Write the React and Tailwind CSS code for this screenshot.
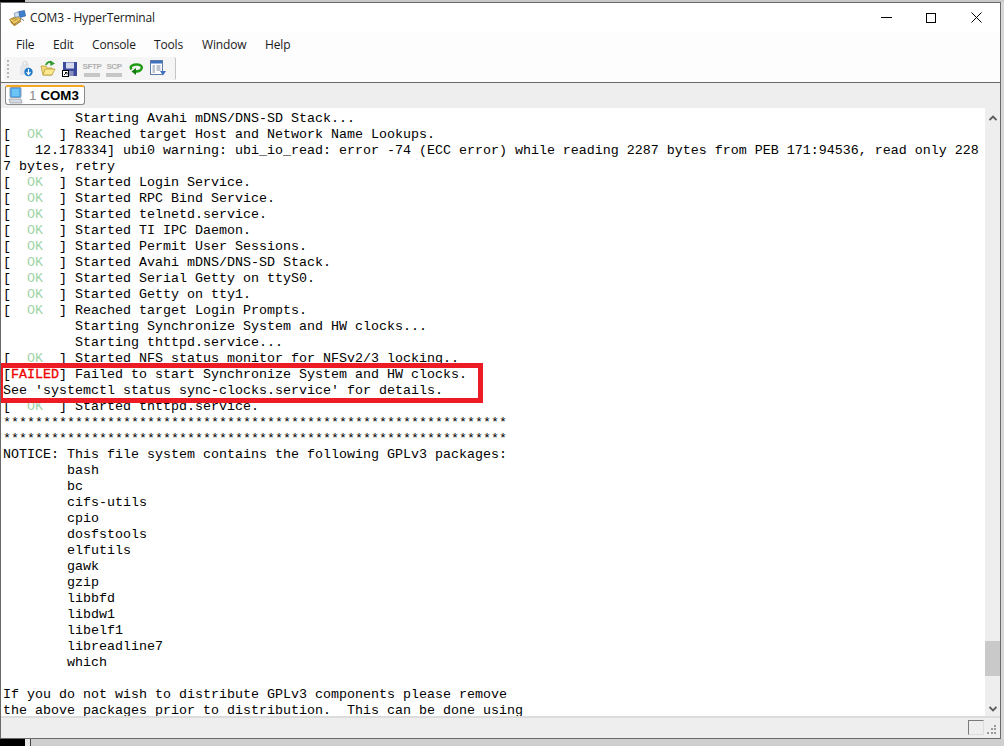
const ok = 'OK';
const L = [
  "         Starting Avahi mDNS/DNS-SD Stack...",
  "#Reached target Host and Network Name Lookups.",
  "[   12.178334] ubi0 warning: ubi_io_read: error -74 (ECC error) while reading 2287 bytes from PEB 171:94536, read only 228",
  "7 bytes, retry",
  "#Started Login Service.",
  "#Started RPC Bind Service.",
  "#Started telnetd.service.",
  "#Started TI IPC Daemon.",
  "#Started Permit User Sessions.",
  "#Started Avahi mDNS/DNS-SD Stack.",
  "#Started Serial Getty on ttyS0.",
  "#Started Getty on tty1.",
  "#Reached target Login Prompts.",
  "         Starting Synchronize System and HW clocks...",
  "         Starting thttpd.service...",
  "#Started NFS status monitor for NFSv2/3 locking..",
  "!Failed to start Synchronize System and HW clocks.",
  "See 'systemctl status sync-clocks.service' for details.",
  "#Started thttpd.service.",
  "*".repeat(63),
  "*".repeat(63),
  "NOTICE: This file system contains the following GPLv3 packages:",
  "        bash",
  "        bc",
  "        cifs-utils",
  "        cpio",
  "        dosfstools",
  "        elfutils",
  "        gawk",
  "        gzip",
  "        libbfd",
  "        libdw1",
  "        libelf1",
  "        libreadline7",
  "        which",
  "",
  "If you do not wish to distribute GPLv3 components please remove",
  "the above packages prior to distribution.  This can be done using",
];

function Line({ t }) {
  if (t[0] === '#') return <div className="h-4">[  <span className="text-[#9fd3a8]">{ok}</span>  ] {t.slice(1)}</div>;
  if (t[0] === '!') return <div className="h-4">[<span className="text-[#f00000] [-webkit-text-stroke:0.3px_#f00000]">FAILED</span>] {t.slice(1)}</div>;
  return <div className="h-4">{t || ' '}</div>;
}

const AppIcon = () => (
  <svg width="17" height="16" viewBox="0 0 17 16" className="shrink-0">
    <path d="M0.5 9.5 L8 6 L12 9.5 L5 14.5 Z" fill="#f0c860" stroke="#8a6a20" strokeWidth="0.8" />
    <path d="M1.5 11.5 L5.5 15.5 L12 11" fill="none" stroke="#a8801c" strokeWidth="1.1" />
    <path d="M3 9.5 L8 7.5 M4.5 11 L9 8.5" stroke="#9a7a2a" strokeWidth="0.7" />
    <path d="M5 3.5 L9.5 1.5 L11 6 L6.5 7.5 Z" fill="#cfe0f2" stroke="#6f88a8" strokeWidth="0.7" />
    <path d="M10 1.5 L15.5 0.5 L16.5 6 L11 7.5 Z" fill="#3f7fd0" stroke="#2f5f9f" strokeWidth="0.7" />
    <path d="M11 8 L15 10.5" stroke="#7a7a7a" strokeWidth="1" />
  </svg>
);

const Grip = () => (
  <div className="flex flex-col gap-[2px] ml-[3px] mr-[9px]">
    {[0, 1, 2, 3, 4].map(i => <div key={i} className="w-[2px] h-[2px] bg-[#b5b5b5]" />)}
  </div>
);

const IconDownload = () => (
  <svg width="16" height="17" viewBox="0 0 16 17">
    <path d="M2 6 L9 3 L11 5 L11 15 L2 15 Z" fill="#e3e6ea" />
    <path d="M5 6 V3.5 A2 2 0 0 1 9 3.5 V6" fill="none" stroke="#d4d7dc" strokeWidth="1.2" />
    <circle cx="10.5" cy="12" r="4.2" fill="#1f78c8" />
    <path d="M10.5 9 V14 M8.5 12 L10.5 14.5 L12.5 12" stroke="#fff" strokeWidth="1.2" fill="none" />
  </svg>
);
const IconFolder = () => (
  <svg width="16" height="17" viewBox="0 0 16 17">
    <path d="M1 6 H6 L7 8 H12 V15 H3 Z" fill="#f6dc7c" stroke="#b89a3a" strokeWidth="0.8" />
    <path d="M3 15 L5 9 H15 L12 15 Z" fill="#fbe98f" stroke="#b89a3a" strokeWidth="0.8" />
    <path d="M6 5 C7 2 10 1 12 3" fill="none" stroke="#2f9a2f" strokeWidth="2" />
    <path d="M10 0.5 L15 3.5 L10.5 6 Z" fill="#2f9a2f" />
  </svg>
);
const IconSave = () => (
  <svg width="16" height="16" viewBox="0 0 16 16">
    <rect x="1" y="1" width="14" height="14" fill="#3c4a9c" />
    <rect x="4" y="1.5" width="8" height="6" fill="#d5d9ee" />
    <rect x="4.5" y="10" width="7" height="5" fill="#8890c0" />
    <rect x="0.5" y="9.5" width="6" height="6" fill="#fff" stroke="#000" strokeWidth="1" />
    <path d="M2 14 L4.5 11.5 M3 11.5 H5 V13.5" stroke="#000" strokeWidth="0.9" fill="none" />
  </svg>
);
const IconReturn = () => (
  <svg width="16" height="16" viewBox="0 0 16 16">
    <path d="M3.5 8.5 C1 5 5 3.5 9 3.5 C13 3.5 15 6 13 8.5 C12 10 9.5 10.5 7 10.5" fill="none" stroke="#1f9a14" strokeWidth="2.4" />
    <path d="M8 7 L3.5 10.5 L8 14 Z" fill="#167a0e" />
  </svg>
);
const IconNotes = () => (
  <svg width="17" height="17" viewBox="0 0 17 17">
    <rect x="0.5" y="0.5" width="12" height="14" fill="#fff" stroke="#5f7ca8" />
    <rect x="1" y="1" width="11" height="2.5" fill="#3f6fc0" />
    <path d="M2.5 6 H5 M2.5 8 H5 M2.5 10 H5 M2.5 12 H5 M6.5 6 H10.5 M6.5 8 H10.5 M6.5 10 H10.5" stroke="#7a8aa0" strokeWidth="1" />
    <path d="M10 11 H16 L13 15.5 Z" fill="#3f6fc0" />
  </svg>
);
const TextTool = ({ label }) => (
  <div className="flex flex-col items-center w-[16px] shrink-0 pt-[1px]">
    <span className="text-[8px] leading-[9px] tracking-[-0.4px] font-bold text-[#b0b0b0] whitespace-nowrap font-['Liberation_Sans',sans-serif]">{label}</span>
    <div className="w-[16px] h-[4px] bg-[#c6c6c6] mt-[2px]" />
  </div>
);

const TabIcon = () => (
  <svg width="16" height="17" viewBox="0 0 16 17" className="shrink-0">
    <rect x="2" y="0.5" width="11" height="10" rx="1" fill="#4aa6ea" stroke="#8a9db0" />
    <rect x="4" y="2" width="7" height="7" fill="#6cc4f5" />
    <path d="M1 12 H13 L14 16 H2 Z" fill="#d6dae0" stroke="#9aa2ac" strokeWidth="0.8" />
  </svg>
);

const Chevron = ({ up }) => (
  <svg width="8" height="6" viewBox="0 0 8 6">
    <path d={up ? "M0.5 5 L4 1.5 L7.5 5" : "M0.5 1 L4 4.5 L7.5 1"} fill="none" stroke="#5a5a5a" strokeWidth="1.8" />
  </svg>
);

export default function App() {
  return (
    <div className="w-[1004px] h-[746px] bg-[#d8d8d8] overflow-hidden flex flex-col font-['Open_Sans',sans-serif]">
      <div className="h-[2px] flex shrink-0">
        <div className="w-[25px] bg-black" />
        <div className="flex-1 bg-[#c9c9c9]" />
      </div>
      <div className="w-[1001px] h-[737px] flex flex-col bg-white border-t border-r border-b border-l border-[#6a6a6a] shrink-0">
        {/* Title bar */}
        <div className="h-[29px] flex items-center shrink-0 pl-[8px] relative">
          <AppIcon />
          <span className="ml-[4px] text-[12px] text-[#1a1a1a] tracking-[-0.15px]">COM3 - HyperTerminal</span>
          <div className="ml-auto flex items-center h-full">
            <div className="w-[11px] h-[1px] bg-black mr-[34px]" />
            <div className="w-[10px] h-[10px] border border-black mr-[35px]" />
            <svg width="11" height="11" viewBox="0 0 11 11" className="mr-[18px]">
              <path d="M0.5 0.5 L10.5 10.5 M10.5 0.5 L0.5 10.5" stroke="#000" strokeWidth="1" />
            </svg>
          </div>
        </div>
        {/* Menu */}
        <div className="h-[25px] flex items-center shrink-0 bg-[#fdfdfd] text-[12px] text-[#1a1a1a] pl-[15px] tracking-[-0.15px]">
          <span className="w-[37px]">File</span>
          <span className="w-[39px]">Edit</span>
          <span className="w-[62px]">Console</span>
          <span className="w-[48px]">Tools</span>
          <span className="w-[63px]">Window</span>
          <span>Help</span>
        </div>
        {/* Toolbar */}
        <div className="h-[25px] flex items-start shrink-0 bg-[#fdfdfd] border-b border-[#6a6a6a] box-content">
          <div className="ml-[3px] w-[172px] h-[23px] bg-[#f5f5f5] rounded-[2px] border-r border-[#c4c4c4] flex items-center">
            <Grip />
            <div className="flex items-center gap-[6px]">
              <IconDownload />
              <IconFolder />
              <IconSave />
              <TextTool label="SFTP" />
              <TextTool label="SCP" />
              <IconReturn />
              <IconNotes />
            </div>
          </div>
        </div>
        {/* Tabs */}
        <div className="h-[25px] bg-[#eeeeee] flex items-start pl-[4px] pt-[2px] shrink-0">
          <div className="w-[80px] h-[20px] bg-white border border-[#8a8a8a] border-t-[2px] border-t-[#f5a623] rounded-[3px] flex items-center pl-[2px] text-[13.3px] font-bold font-['Liberation_Sans',sans-serif] leading-none">
            <TabIcon />
            <span className="ml-[5px] font-normal text-[#8a8a8a]">1</span>
            <span className="ml-[4px] text-black">COM3</span>
          </div>
        </div>
        {/* Terminal */}
        <div className="h-[608px] flex shrink-0 bg-[#eeeeee]">
          <div className="relative flex-1 bg-white overflow-hidden pl-[2px] pt-[3px] font-['Liberation_Mono',monospace] text-[13.33px] leading-[16px] text-black whitespace-pre">
            {L.map((t, i) => <Line key={i} t={t} />)}
            <div className="absolute left-0 top-[255px] w-[482px] h-[40px] border-[5px] border-l-[2px] border-[#ed1c24]" />
          </div>
          <div className="w-[15px] flex flex-col items-center shrink-0">
            <div className="h-[18px] flex items-center justify-center pt-[2px]"><Chevron up /></div>
            <div className="h-[515px]" />
            <div className="w-full h-[35px] bg-[#c9c9c9]" />
            <div className="flex-1 flex items-end pb-[4px] justify-center"><Chevron /></div>
          </div>
        </div>
        {/* Status */}
        <div className="flex-1 bg-[#eeeeee] border-t-2 border-[#dcdcdc] flex items-start justify-end relative">
          <div className="w-[16px] h-[15px] mt-[2px] mr-[16px] border-l border-t border-[#7a7a7a] border-r border-b border-r-[#dddddd] border-b-[#dddddd]" />
          <svg width="11" height="11" viewBox="0 0 11 11" className="absolute right-[3px] bottom-[2px]">
            <g fill="#9a9a9a">
              <rect x="8" y="0" width="2" height="2" />
              <rect x="5" y="3" width="2" height="2" /><rect x="8" y="3" width="2" height="2" />
              <rect x="1" y="7" width="2" height="2" /><rect x="5" y="7" width="2" height="2" /><rect x="8" y="7" width="2" height="2" />
            </g>
          </svg>
        </div>
      </div>
      <div className="flex-1 flex">
        <div className="w-[25px] bg-black" />
        <div className="w-[5px] bg-[#e8e8e8]" />
        <div className="w-[1px] bg-[#444444]" />
        <div className="flex-1 bg-[#cfcfcf]" />
      </div>
    </div>
  );
}
